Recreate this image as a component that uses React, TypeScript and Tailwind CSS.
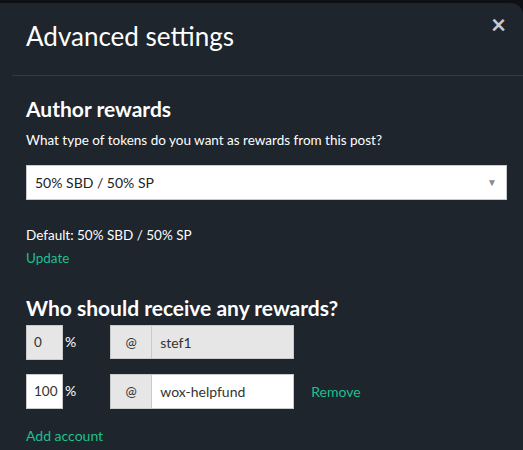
import React from 'react';

const font = { fontFamily: '"Lato", "Open Sans", sans-serif' };

export default function App() {
  return (
    <div className="w-[523px] h-[450px] overflow-hidden bg-[#0d1115]" style={font}>
      {/* backdrop strip above the modal */}
      <div className="h-[3px]" />
      <div className="relative bg-[#1e252d] rounded-tr-xl h-[447px] text-white">
        <button className="absolute right-[17px] top-[8px] text-[#c5cbd2] text-[26px] leading-none font-bold">×</button>
        <div className="pl-[26px] pt-[15px] h-[72px]">
          <h1 className="text-[26px] leading-[36px] font-normal">Advanced settings</h1>
        </div>
        <div className="ml-[12px] h-px bg-[#323c47]" />

        <div className="px-[26px] pt-[19px]">
          <h2 className="text-[21px] leading-[27px] font-bold">Author rewards</h2>
          <p className="mt-[8px] text-[13.5px] leading-[20px]">What type of tokens do you want as rewards from this post?</p>

          <div className="mt-[15px] w-[481px] h-[35px] bg-white border border-[#cacaca] flex items-center justify-between px-[8px] text-[#222] text-[14px]">
            <span>50% SBD / 50% SP</span>
            <span className="text-[#8a8a8a] text-[10px] mr-[1px]">▼</span>
          </div>

          <p className="mt-[25px] text-[13.5px] leading-[20px]">Default: 50% SBD / 50% SP</p>
          <a className="block mt-[3px] text-[13.5px] leading-[20px] text-[#1fbf8f]">Update</a>

          <h2 className="mt-[26px] text-[21px] leading-[27px] font-bold">Who should receive any rewards?</h2>

          <div className="mt-[4px] flex items-start">
            <div className="w-[37px] h-[35px] bg-[#e6e6e6] border border-[#cacaca] text-[#333] text-[13.5px] flex items-center pl-[7px]">0</div>
            <span className="ml-[2px] mt-[6px] text-[14px]">%</span>
            <div className="ml-[34px] flex h-[34px]">
              <div className="w-[42px] bg-[#e6e6e6] border border-[#cacaca] text-[#333] text-[13.5px] flex items-center justify-center">@</div>
              <div className="w-[142px] bg-[#e6e6e6] border border-l-0 border-[#cacaca] text-[#333] text-[14px] flex items-center pl-[8px]">stef1</div>
            </div>
          </div>

          <div className="mt-[14px] flex items-start">
            <div className="w-[37px] h-[35px] bg-white border border-[#cacaca] text-[#333] text-[13.5px] flex items-center pl-[7px]">100</div>
            <span className="ml-[2px] mt-[6px] text-[14px]">%</span>
            <div className="ml-[34px] flex h-[35px]">
              <div className="w-[42px] bg-[#e6e6e6] border border-[#cacaca] text-[#333] text-[13.5px] flex items-center justify-center">@</div>
              <div className="w-[142px] bg-white border border-l-0 border-[#cacaca] text-[#333] text-[14px] flex items-center pl-[8px]">wox-helpfund</div>
            </div>
            <a className="ml-[17px] self-center text-[14px] text-[#1fbf8f]">Remove</a>
          </div>

          <a className="block mt-[17px] text-[14px] leading-[20px] text-[#1fbf8f]">Add account</a>
        </div>
      </div>
    </div>
  );
}
